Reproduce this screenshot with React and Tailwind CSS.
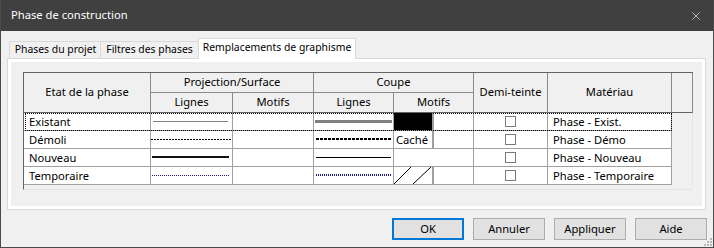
import { X } from 'lucide-react'

const FONT = "font-['Noto_Sans',sans-serif]"

function LineSample({ color, width = 1, dash, inset = 'mx-[2px]' }) {
  // keep odd widths on the pixel grid so thin lines stay crisp
  const y = Math.round(width) % 2 === 1 ? 2.5 : 2
  return (
    <svg className={`block ${inset}`} width="100%" height="5">
      <line x1="0" y1={y} x2="100%" y2={y} stroke={color} strokeWidth={width} strokeDasharray={dash} shapeRendering="crispEdges" />
    </svg>
  )
}

function Check() {
  return <div className="w-[11px] h-[11px] border border-[#7a7a7a] bg-white" />
}

const ROWS = [
  {
    name: 'Existant',
    projLine: <LineSample color="#808080" inset="mx-[2px] pr-[2px]" />,
    cutLine: <LineSample color="#808080" width={3} inset="ml-[1px] mr-[1px]" />,
    cutPattern: <div className="h-full w-full bg-black" />,
    bar: true,
    mat: 'Phase - Exist.',
  },
  {
    name: 'Démoli',
    projLine: <LineSample color="#000" dash="2 1" inset="mx-0" />,
    cutLine: <LineSample color="#000" width={2} dash="3 1" inset="ml-[2px] mr-[1px]" />,
    cutPattern: <span className="pl-[2px] leading-[17px]">Caché</span>,
    bar: true,
    mat: 'Phase - Démo',
  },
  {
    name: 'Nouveau',
    projLine: <LineSample color="#111" width={2} inset="mx-[1px] pr-[2px]" />,
    cutLine: <LineSample color="#000" width={1} inset="ml-[2px] mr-[2px]" />,
    cutPattern: null,
    bar: false,
    mat: 'Phase - Nouveau',
  },
  {
    name: 'Temporaire',
    projLine: <LineSample color="#1a1a8c" dash="1 1" inset="mx-[1px] pr-[1px]" />,
    cutLine: <LineSample color="#1a1a8c" width={2} dash="1 1" inset="ml-[2px] mr-[1px]" />,
    cutPattern: (
      <svg width="39" height="17" className="block">
        <line x1="0" y1="17" x2="17" y2="0" stroke="#000" strokeWidth="1" />
        <line x1="19" y1="17" x2="37" y2="0" stroke="#000" strokeWidth="1" />
      </svg>
    ),
    bar: true,
    mat: 'Phase - Temporaire',
  },
]

const headCell = 'flex items-center justify-center whitespace-nowrap bg-[#f0f0f0] border-r border-b border-[#8a8a8a]'
const dataCell = 'bg-white border-r border-b border-[#a0a0a0] whitespace-nowrap overflow-hidden'

function PhaseGrid() {
  return (
    <div className="w-[670px] h-[118px] border-l border-t border-l-[#646464] border-t-[#646464] border-b border-b-[#e3e3e3]">
      <div className="relative grid grid-cols-[127px_82px_81px_80px_80px_74px_124px_21px] grid-rows-[20px_20px_18px_18px_18px_18px]">
        <div className={`${headCell} row-span-2 border-b-[#646464]`}>Etat de la phase</div>
        <div className={`${headCell} col-span-2`}>Projection/Surface</div>
        <div className={`${headCell} col-span-2`}>Coupe</div>
        <div className={`${headCell} row-span-2 border-b-[#646464]`}>Demi-teinte</div>
        <div className={`${headCell} row-span-2 border-b-[#646464]`}>Matériau</div>
        <div className={`${headCell} row-span-2 border-b-[#646464]`} />
        <div className={`${headCell} border-b-[#646464]`}>Lignes</div>
        <div className={`${headCell} border-b-[#646464]`}>Motifs</div>
        <div className={`${headCell} border-b-[#646464]`}>Lignes</div>
        <div className={`${headCell} border-b-[#646464]`}>Motifs</div>

        {ROWS.map((r) => (
          <div key={r.name} className="contents">
            <div className={`${dataCell} pl-[5px] leading-[17px]`}>{r.name}</div>
            <div className={`${dataCell} flex items-center`}>{r.projLine}</div>
            <div className={dataCell} />
            <div className={`${dataCell} flex items-center`}>{r.cutLine}</div>
            <div className={`${dataCell} flex`}>
              <div className="w-[38px] h-full">{r.cutPattern}</div>
              {r.bar && <div className="w-[2px] h-full bg-[#a0a0a0]" />}
            </div>
            <div className={`${dataCell} flex items-center justify-center`}>
              <Check />
            </div>
            <div className={`${dataCell} pl-[5px] leading-[17px]`}>{r.mat}</div>
            <div className="border-r border-[#e3e3e3]" />
          </div>
        ))}

        {/* focus rectangle of the current row */}
        <div className="absolute left-[1px] top-[40px] w-[647px] h-[18px] border border-dotted border-black pointer-events-none" />
      </div>
    </div>
  )
}

function Btn({ children, primary }) {
  return (
    <button
      className={`w-[72px] h-[22px] bg-[#e1e1e1] text-black flex items-center justify-center ${
        primary ? 'border-2 border-[#0078d7]' : 'border border-[#adadad]'
      }`}
    >
      {children}
    </button>
  )
}

export default function App() {
  return (
    <div className={`${FONT} text-[11.2px] text-black relative w-[714px] h-[248px] bg-[#f0f0f0] border-x border-b border-[#4a4a4a] flex flex-col`}>
      {/* title bar */}
      <div className="h-[31px] shrink-0 bg-[#404040] flex items-center justify-between pl-[10px] pr-[9px] text-white">
        <span className="text-[11.2px]">Phase de construction</span>
        <X size={14} strokeWidth={1.2} className="mr-[1px] text-[#e8e8e8]" />
      </div>

      {/* tabs */}
      <div className="pl-[6px] pr-[7px] pt-[7px]">
        <div className="flex items-end h-[20px] ml-[2px] whitespace-nowrap text-[10.4px]">
          <div className="w-[91px] h-[17px] border-l border-t border-[#d9d9d9] flex items-center justify-center pl-[1px]">
            Phases du projet
          </div>
          <div className="w-[98px] h-[17px] border-l border-t border-[#d9d9d9] flex items-center justify-center">
            Filtres des phases
          </div>
          <div className="relative z-10 w-[158px] h-[21px] -mb-px bg-white border-l border-t border-r border-[#d9d9d9] flex items-center justify-center pb-[2px]">
            Remplacements de graphisme
          </div>
        </div>

        <div className="h-[152px] border border-[#d9d9d9] bg-white p-[3px]">
          <div className="h-full bg-[#f0f0f0] pl-[12px] pt-[10px]">
            <PhaseGrid />
          </div>
        </div>
      </div>

      {/* buttons */}
      <div className="flex justify-end gap-[9px] pr-[6px] mt-[8px]">
        <Btn primary>OK</Btn>
        <Btn>Annuler</Btn>
        <Btn>Appliquer</Btn>
        <Btn>Aide</Btn>
      </div>

      {/* resize grip */}
      <svg className="absolute right-[1px] bottom-[1px]" width="8" height="8">
        {[[6, 0], [3, 3], [6, 3], [0, 6], [3, 6], [6, 6]].map(([x, y]) => (
          <rect key={`${x}-${y}`} x={x} y={y} width="2" height="2" fill="#b8b8b8" />
        ))}
      </svg>
    </div>
  )
}
